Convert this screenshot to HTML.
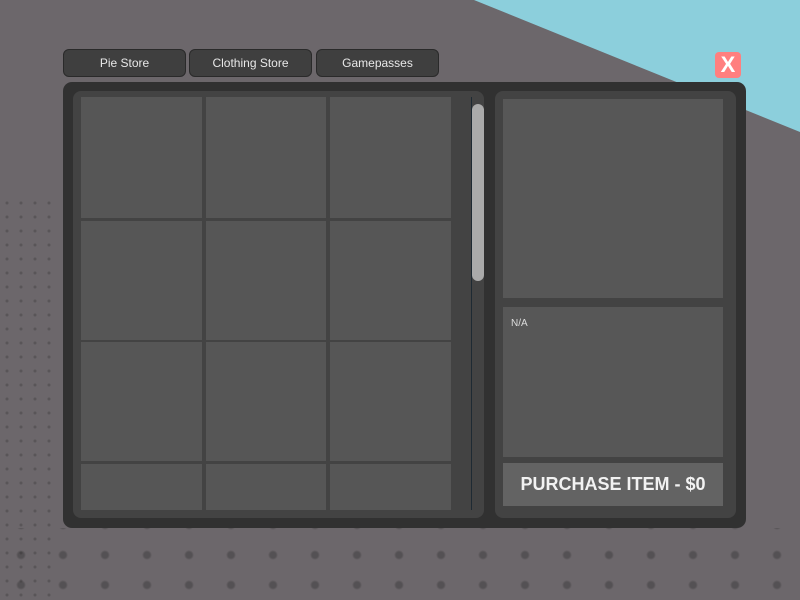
<!DOCTYPE html>
<html><head><style>
*{margin:0;padding:0;box-sizing:border-box}
body{width:800px;height:600px;overflow:hidden;position:relative;background:#6c676b;font-family:"Liberation Sans",sans-serif}
.sky{position:absolute;left:0;top:0;width:800px;height:600px;background:#8ccfdc;clip-path:polygon(474px 0,800px 0,800px 132px)}
.dots{position:absolute;left:0;top:0;width:800px;height:600px;background-image:radial-gradient(circle,rgba(30,30,30,.25) 1px,transparent 2px);background-size:14px 14px;clip-path:polygon(0 200px,60px 200px,60px 600px,0 600px)}
.dots2{position:absolute;left:0;top:0;width:800px;height:600px;background-image:radial-gradient(circle,rgba(30,30,30,.3) 3px,transparent 5px);background-size:42px 30px;clip-path:polygon(0 528px,800px 528px,800px 600px,0 600px)}
.abs{position:absolute}
.tab{position:absolute;top:49px;height:28px;width:123px;background:#3f3f3f;border:1px solid #2a2a2a;border-radius:6px;color:#e8e8e8;font-size:12px;text-align:center;line-height:27px}
.close{left:715px;top:52px;width:26px;height:26px;background:#ff7f7f;border-radius:4px;color:#fff;font-weight:bold;font-size:22px;text-align:center;line-height:26px}
.outer{left:63px;top:82px;width:683px;height:446px;background:#313131;border-radius:9px}
.lp{left:73px;top:91px;width:411px;height:427px;background:#434343;border-radius:8px;overflow:hidden}
.rp{left:495px;top:91px;width:241px;height:427px;background:#434343;border-radius:8px}
.cell{position:absolute;background:#565656}
</style></head><body>
<div class="sky"></div>
<div class="dots"></div>
<div class="dots2"></div>
<div class="tab" style="left:63px">Pie Store</div>
<div class="tab" style="left:189px">Clothing Store</div>
<div class="tab" style="left:316px">Gamepasses</div>
<div class="abs close">X</div>
<div class="abs outer"></div>
<div class="abs lp">
<div class="cell" style="left:8px;top:6px;width:121px;height:121px"></div>
<div class="cell" style="left:133px;top:6px;width:120px;height:121px"></div>
<div class="cell" style="left:257px;top:6px;width:121px;height:121px"></div>
<div class="cell" style="left:8px;top:130px;width:121px;height:119px"></div>
<div class="cell" style="left:133px;top:130px;width:120px;height:119px"></div>
<div class="cell" style="left:257px;top:130px;width:121px;height:119px"></div>
<div class="cell" style="left:8px;top:251px;width:121px;height:119px"></div>
<div class="cell" style="left:133px;top:251px;width:120px;height:119px"></div>
<div class="cell" style="left:257px;top:251px;width:121px;height:119px"></div>
<div class="cell" style="left:8px;top:373px;width:121px;height:46px"></div>
<div class="cell" style="left:133px;top:373px;width:120px;height:46px"></div>
<div class="cell" style="left:257px;top:373px;width:121px;height:46px"></div>
<div class="abs" style="left:398px;top:6px;width:1px;height:413px;background:#1e2a33"></div>
<div class="abs" style="left:399px;top:13px;width:12px;height:177px;background:#aaaaaa;border-radius:6px"></div>
</div>
<div class="abs rp"></div>
<div class="abs" style="left:503px;top:99px;width:220px;height:199px;background:#575757"></div>
<div class="abs" style="left:503px;top:307px;width:220px;height:150px;background:#575757;color:#ddd;font-size:10px;padding:11px 0 0 8px">N/A</div>
<div class="abs" style="left:503px;top:463px;width:220px;height:43px;background:#636363;color:#f2f2f2;font-weight:bold;font-size:18px;text-align:center;line-height:43px">PURCHASE ITEM - $0</div>
</body></html>
